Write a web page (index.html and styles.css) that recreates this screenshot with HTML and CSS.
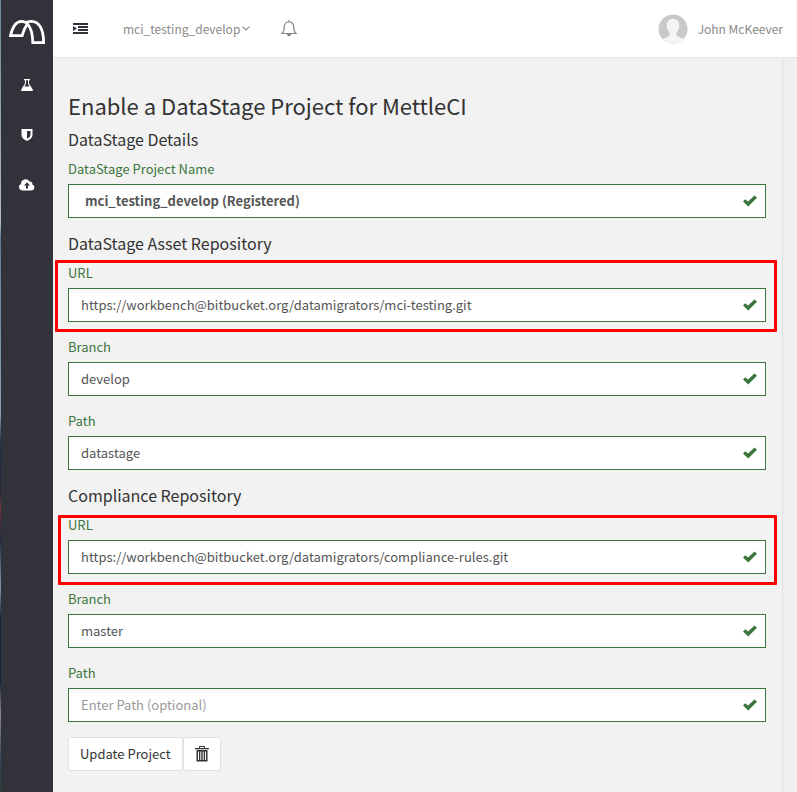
FILE: index.html
```html
<!DOCTYPE html>
<html lang="en">
<head>
<meta charset="utf-8">
<meta name="viewport" content="width=device-width, initial-scale=1">
<title>Enable a DataStage Project for MettleCI</title>
<link rel="stylesheet" href="styles.css">
</head>
<body>
<svg class="sprite" aria-hidden="true">
  <symbol id="check" viewBox="0 0 14 12"><path d="M0 6.6 2.3 4.2 5 6.6 11.5.4 14 2.7 5.2 11.6Z"/></symbol>
</svg>
<div class="app">
  <nav class="sidebar" aria-label="Main">
    <a class="logo" href="#" aria-label="Home">
      <svg width="36" height="24" viewBox="0 0 36 24" fill="none" stroke="#fff" stroke-width="2.8"><path d="M1.500 15.600C3.500 7 7 1.400 12.500 1.400C15 1.400 17 2.400 18.500 4.200C16 7 14.500 11 13.200 15.600Z"/><path d="M16 2.800C18 1.800 20 1.400 22.500 1.400C30 1.400 34.600 9 34.600 22.600H23.800C23.600 14 22 7.500 18.300 4"/></svg>
    </a>
    <a class="nav-link" href="#" aria-label="Tests">
      <svg width="12" height="12" viewBox="0 0 12 12"><path fill="#fff" fill-rule="evenodd" d="M3 0H9V1.200H8V4.500L11.800 10.500Q12.300 12 11 12H1Q-.3 12 .2 10.500L4 4.500V1.200H3ZM5 1.200V4.800L3.400 7.500H8.600L7 4.800V1.200Z"/></svg>
    </a>
    <a class="nav-link" href="#" aria-label="Compliance">
      <svg width="12" height="12" viewBox="0 0 12 12"><path fill="#fff" fill-rule="evenodd" d="M.5 0H11.500V6Q11.500 9.500 6 12Q.5 9.500 .5 6ZM6 2V9.700Q9.500 8 9.500 6V2Z"/></svg>
    </a>
    <a class="nav-link" href="#" aria-label="Deploy">
      <svg width="16" height="12" viewBox="0 0 16 12"><path fill="#fff" fill-rule="evenodd" d="M3.500 11.500A3.400 3.400 0 0 1 2 5A4.600 4.600 0 0 1 10.500 2.500A2.400 2.400 0 0 1 13.300 5.500A3.100 3.100 0 0 1 12.700 11.500ZM7 9.500H9V6.500H11L8 3.300 5 6.500H7Z"/></svg>
    </a>
  </nav>
  <div class="page">
    <header class="topbar">
      <button class="icon-button" type="button" aria-label="Toggle menu">
        <svg width="15" height="11" viewBox="0 0 15 11" fill="#32323a"><path d="M0 0H15V2H0ZM5 3H15V5H5ZM5 6H15V8H5ZM0 9H15V11H0ZM0 3 4 5.500 0 8Z"/></svg>
      </button>
      <button class="project-menu" type="button">mci_testing_develop
        <svg width="8" height="5" viewBox="0 0 8 5" fill="none" stroke="#8a8a8a" stroke-width="1.200"><path d="M.5.6 4 4 7.500.6"/></svg>
      </button>
      <button class="icon-button" type="button" aria-label="Notifications">
        <svg width="16" height="17" viewBox="0 0 16 17" fill="none" stroke="#858585" stroke-width="1.200"><path d="M8 0V2M1 13.500Q3.300 11.500 3.300 7Q3.300 2 8 2Q12.700 2 12.700 7Q12.700 11.500 15 13.500Z"/><path fill="#858585" stroke="none" d="M6 14H10Q10 16.200 8 16.200Q6 16.200 6 14Z"/></svg>
      </button>
      <a class="user" href="#">
        <svg width="30" height="30" viewBox="0 0 30 30"><circle cx="15" cy="15" r="14.500" fill="#c9c9c9"/><path fill="#f4f4f4" d="M15 5C19 5 21.500 7.500 21.300 12C21.200 15 20 17 18.500 18.500V21Q19 22.500 25.600 25A14.500 14.500 0 0 1 4.400 25Q11 22.500 11.500 21V18.500C10 17 8.800 15 8.700 12C8.500 7.500 11 5 15 5Z"/></svg>
        John McKeever
      </a>
    </header>
    <main class="content">
      <form class="panel">
        <h1>Enable a DataStage Project for MettleCI</h1>
        <h2>DataStage Details</h2>
        <div class="field">
          <label for="project">DataStage Project Name</label>
          <div class="control">
            <select id="project" class="input project-select"><option>mci_testing_develop (Registered)</option></select>
            <svg class="check"><use href="#check"/></svg>
          </div>
        </div>
        <h2>DataStage Asset Repository</h2>
        <div class="field">
          <label for="asset-url">URL</label>
          <div class="control">
            <input id="asset-url" class="input" type="text" value="https://workbench@bitbucket.org/datamigrators/mci-testing.git">
            <svg class="check"><use href="#check"/></svg>
          </div>
          <div class="highlight highlight-asset"></div>
        </div>
        <div class="field">
          <label for="asset-branch">Branch</label>
          <div class="control">
            <input id="asset-branch" class="input" type="text" value="develop">
            <svg class="check"><use href="#check"/></svg>
          </div>
        </div>
        <div class="field">
          <label for="asset-path">Path</label>
          <div class="control">
            <input id="asset-path" class="input" type="text" value="datastage">
            <svg class="check"><use href="#check"/></svg>
          </div>
        </div>
        <h2>Compliance Repository</h2>
        <div class="field">
          <label for="rules-url">URL</label>
          <div class="control">
            <input id="rules-url" class="input" type="text" value="https://workbench@bitbucket.org/datamigrators/compliance-rules.git">
            <svg class="check"><use href="#check"/></svg>
          </div>
          <div class="highlight highlight-rules"></div>
        </div>
        <div class="field">
          <label for="rules-branch">Branch</label>
          <div class="control">
            <input id="rules-branch" class="input" type="text" value="master">
            <svg class="check"><use href="#check"/></svg>
          </div>
        </div>
        <div class="field">
          <label for="rules-path">Path</label>
          <div class="control">
            <input id="rules-path" class="input" type="text" placeholder="Enter Path (optional)">
            <svg class="check"><use href="#check"/></svg>
          </div>
        </div>
        <div class="actions">
          <button class="button" type="button">Update Project</button>
          <button class="button" type="button" aria-label="Delete project">
            <svg width="14" height="16" viewBox="0 0 14 16"><path fill="none" stroke="#333" d="M4.500 2V.5H9.500V2"/><path fill="#333" fill-rule="evenodd" d="M0 2H14V3.200H0ZM1.500 4H12.500V15.500H1.500ZM3 5.500V14H4V5.500ZM5.300 5.500V14H6.300V5.500ZM7.700 5.500V14H8.700V5.500ZM10 5.500V14H11V5.500Z"/></svg>
          </button>
        </div>
      </form>
    </main>
  </div>
</div>
</body>
</html>
```
FILE: styles.css
```css
* { box-sizing: border-box; }

body {
  margin: 0;
  background: #f2f2f2;
  color: #333;
  font: 13px/20px "Noto Sans CJK SC", "Open Sans", sans-serif;
}

button, input, select { font: inherit; color: inherit; }
a { color: inherit; text-decoration: none; }
svg { display: block; flex: none; }
.sprite { position: absolute; width: 0; height: 0; }

.app { display: flex; min-height: 100vh; }

.sidebar {
  flex: none;
  width: 53px;
  display: flex;
  flex-direction: column;
  background: #32323a;
  border-left: 1px solid;
  border-image: linear-gradient(#6d8798, #b5bdc4 28%, #5d7f99 30%, #8fa0b3 52%, #20324a 56%, #1d2437 62%, #7a3340 64%, #1a2a3c 68%, #8795a8 74%, #14243a 78%, #14243a 86%, #8f8795 90%, #31465a 96%, #2b4030) 1;
}
.logo { display: flex; justify-content: center; padding: 20px 0 16px; }
.nav-link { display: flex; align-items: center; justify-content: center; height: 50px; }

.page { flex: 1; min-width: 0; display: flex; flex-direction: column; }

.topbar {
  display: flex;
  align-items: center;
  height: 58px;
  padding: 0 14px 0 20px;
  background: #fff;
  border-bottom: 1px solid #e4e4e4;
  color: #8a8a8a;
  font-size: 12px;
}
.icon-button, .project-menu {
  display: flex;
  align-items: center;
  padding: 0;
  border: 0;
  background: none;
}
.project-menu { gap: 2px; margin: 0 31px 0 35px; }
.user { display: flex; align-items: center; gap: 10px; margin-left: auto; }

.content { flex: 1; display: flex; padding-right: 14px; background: #efefef; }
.panel {
  flex: 1;
  min-width: 0;
  padding: 35px 16px 20px 15px;
  background: #f2f2f2;
  border-right: 1px solid #e2e2e2;
}

h1, h2 { margin: 0; font-weight: 400; }
h1 { margin-bottom: 12px; font-size: 22px; line-height: 24px; }
h2 { margin-bottom: 10px; font-size: 16px; line-height: 20px; }

.field { position: relative; margin-bottom: 15px; }
.field label { display: block; margin-bottom: 5px; color: #3c763d; }
.control { position: relative; }
.input {
  display: block;
  width: 100%;
  height: 34px;
  padding: 0 34px 2px 12px;
  border: 1px solid #3c763d;
  border-radius: 0;
  background: #fff;
  color: #555;
}
.input::placeholder { color: #999; opacity: 1; }
.project-select { appearance: none; padding: 0 34px 0 16px; font-weight: 700; }
.check {
  position: absolute;
  top: 11px;
  right: 9px;
  width: 14px;
  height: 12px;
  fill: #3c763d;
  pointer-events: none;
}

.highlight { position: absolute; border: 3px solid #f00; border-radius: 1px; pointer-events: none; }
.highlight-asset { inset: -3px -11px -10px -13px; }
.highlight-rules { inset: 0 -11px -11px -10px; }

.actions { display: flex; }
.button {
  display: flex;
  align-items: center;
  height: 34px;
  padding: 0 11px;
  border: 1px solid #e2e2e2;
  border-radius: 3px;
  background: #fff;
}
```
